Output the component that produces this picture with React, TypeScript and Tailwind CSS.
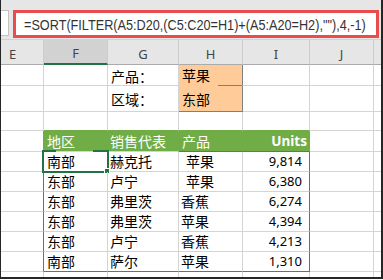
import React from "react";

const G = "border-r border-r-[#d4d4d4]";
const GB = "border-b border-b-[#d4d4d4]";

type CP = {
  w: string;
  r?: string;
  b?: string;
  className?: string;
  children?: React.ReactNode;
};

function C({ w, r = G, b = GB, className = "", children }: CP) {
  return (
    <div className={`${w} ${r} ${b} shrink-0 h-full flex items-center ${className}`}>
      {children}
    </div>
  );
}

const cjk = "font-['Noto_Sans_CJK_SC',sans-serif] text-[14px] text-black whitespace-nowrap";
const num = "font-['Noto_Sans',sans-serif] text-[13px] text-black";

const rows = [
  ["南部", "赫克托", "苹果", "9,814"],
  ["东部", "卢宁", "苹果", "6,380"],
  ["东部", "弗里茨", "香蕉", "6,274"],
  ["东部", "弗里茨", "苹果", "4,394"],
  ["东部", "卢宁", "香蕉", "4,213"],
  ["南部", "萨尔", "苹果", "1,310"],
];

export default function App() {
  return (
    <div className="w-[383px] h-[280px] bg-white">
      <div className="h-[279px] flex flex-col border-l border-l-[#262626] border-r-2 border-r-[#262626] border-b-2 border-b-[#262626]">
        {/* formula bar */}
        <div className="h-[40px] shrink-0 bg-[#e6e6e6] border-b border-b-[#d2d2d2] flex items-start pt-[10px]">
          <div className="w-[8px] h-[26px] bg-white border-y border-r border-[#c3c3c3]" />
          <div className="ml-[4px] w-[366px] h-[28px] bg-white border-[3px] border-[#e84c4c] flex items-center pl-[8px] overflow-hidden">
            <span className="inline-block origin-left scale-x-[0.845] font-['Liberation_Sans',sans-serif] text-[15px] text-[#333] whitespace-nowrap leading-none">
              =SORT(FILTER(A5:D20,(C5:C20=H1)+(A5:A20=H2),""),4,-1)
            </span>
          </div>
        </div>

        {/* column headers */}
        <div className="flex h-[25px] shrink-0 bg-[#e6e6e6] font-['Noto_Sans',sans-serif] text-[13px] text-[#444]">
          <C w="w-[43px]" r="border-r border-r-[#cdcdcd]" b="border-b border-b-[#ababab]" className="pl-[8px] pt-[6px]">E</C>
          <C w="w-[64px]" r="border-r border-r-[#cdcdcd]" b="border-b-2 border-b-[#217346]" className="bg-[#d2d2d2] justify-center pt-[5px]">F</C>
          <C w="w-[71px]" r="border-r border-r-[#cdcdcd]" b="border-b border-b-[#ababab]" className="justify-center pt-[6px]">G</C>
          <C w="w-[64px]" r="border-r border-r-[#cdcdcd]" b="border-b border-b-[#ababab]" className="justify-center pt-[6px]">H</C>
          <C w="w-[67px]" r="border-r border-r-[#cdcdcd]" b="border-b border-b-[#ababab]" className="justify-center pt-[6px]">I</C>
          <C w="w-[64px]" r="border-r border-r-[#cdcdcd]" b="border-b border-b-[#ababab]" className="justify-center pt-[6px]">J</C>
          <C w="w-[7px]" r="" b="border-b border-b-[#ababab]" />
        </div>

        {/* row: 产品 */}
        <div className="flex h-[21px] shrink-0">
          <C w="w-[43px]" />
          <C w="w-[64px]" />
          <C w="w-[71px]" className={`pl-[3px] pt-[2px] ${cjk}`}>产品：</C>
          <C w="w-[64px]" r="border-r border-r-[#7f7f7f]" b="border-b border-b-[#ffcc99]" className={`relative bg-[#ffcc99] pl-[3px] pt-[1px] ${cjk}`}>
            苹果
            <div className="absolute right-0 bottom-[-1px] w-[24px] h-px bg-[#7f7f7f]" />
          </C>
          <C w="w-[67px]" />
          <C w="w-[64px]" />
          <C w="w-[7px]" r="" />
        </div>

        {/* row: 区域 */}
        <div className="flex h-[26px] shrink-0">
          <C w="w-[43px]" />
          <C w="w-[64px]" />
          <C w="w-[71px]" className={`pl-[3px] pt-[2px] ${cjk}`}>区域：</C>
          <C w="w-[64px]" r="border-r border-r-[#7f7f7f]" b="border-b border-b-[#7f7f7f]" className={`bg-[#ffcc99] pl-[3px] pt-[2px] ${cjk}`}>
            东部
          </C>
          <C w="w-[67px]" />
          <C w="w-[64px]" />
          <C w="w-[7px]" r="" />
        </div>

        {/* empty row */}
        <div className="flex h-[19px] shrink-0">
          <C w="w-[43px]" />
          <C w="w-[64px]" b="border-b border-b-[#70ad47]" />
          <C w="w-[71px]" b="border-b border-b-[#70ad47]" />
          <C w="w-[64px]" b="border-b border-b-[#70ad47]" />
          <C w="w-[67px]" b="border-b border-b-[#70ad47]" />
          <C w="w-[64px]" />
          <C w="w-[7px]" r="" />
        </div>

        {/* table header */}
        <div className="flex h-[21px] shrink-0">
          <C w="w-[43px]" r="border-r border-r-[#70ad47]" />
          <C w="w-[64px]" r="border-r border-r-[#70ad47]" className={`bg-[#70ad47] pl-[3px] ${cjk} !text-white`}>地区</C>
          <C w="w-[71px]" r="border-r border-r-[#70ad47]" className={`bg-[#70ad47] pl-[2px] ${cjk} !text-white`}>销售代表</C>
          <C w="w-[64px]" r="border-r border-r-[#70ad47]" b="border-b border-b-[#4472c4]" className={`bg-[#70ad47] pl-[3px] ${cjk} !text-white`}>产品</C>
          <C w="w-[67px]" r="border-r border-r-[#70ad47]" b="border-b border-b-[#4472c4]" className="bg-[#70ad47] justify-end pr-[2px] font-['Noto_Sans',sans-serif] text-[13.5px] font-bold text-white">Units</C>
          <C w="w-[64px]" />
          <C w="w-[7px]" r="" />
        </div>

        {rows.map((r, i) => {
          const last = i === rows.length - 1;
          const bb = last ? "border-b border-b-[#4472c4]" : GB;
          return (
            <div key={i} className="flex h-[20px] shrink-0">
              <C w="w-[43px]" r="border-r border-r-[#4472c4]" />
              <C w="w-[64px]" b={bb} className={`relative pl-[3px] ${cjk}`}>
                {r[0]}
                {i === 0 && (
                  <>
                    <div className="absolute left-[-2px] top-[-2px] w-[67px] h-[23px] border-l-2 border-r-2 border-b-2 border-[#217346]" />
                    <div className="absolute left-[-2px] top-[-2px] w-[14px] h-[2px] bg-[#217346]" />
                    <div className="absolute left-[49px] top-[-2px] w-[16px] h-[2px] bg-[#217346]" />
                    <div className="absolute left-[60px] top-[16px] w-[6px] h-[6px] bg-[#217346] border border-white" />
                  </>
                )}
              </C>
              <C w="w-[71px]" b={bb} className={`pl-[2px] ${cjk}`}>{r[1]}</C>
              <C w="w-[64px]" b={bb} className={`${i < 2 ? "pl-[7px]" : "pl-[2px]"} ${cjk}`}>{r[2]}</C>
              <C w="w-[67px]" r="border-r border-r-[#4472c4]" b={bb} className={`justify-end pr-[7px] ${num}`}>{r[3]}</C>
              <C w="w-[64px]" />
              <C w="w-[7px]" r="" />
            </div>
          );
        })}

        {/* partial row */}
        <div className="flex h-[5px] shrink-0">
          <C w="w-[43px]" b="" />
          <C w="w-[64px]" b="" />
          <C w="w-[71px]" b="" />
          <C w="w-[64px]" b="" />
          <C w="w-[67px]" b="" />
          <C w="w-[64px]" b="" />
          <C w="w-[7px]" r="" b="" />
        </div>
      </div>
    </div>
  );
}
